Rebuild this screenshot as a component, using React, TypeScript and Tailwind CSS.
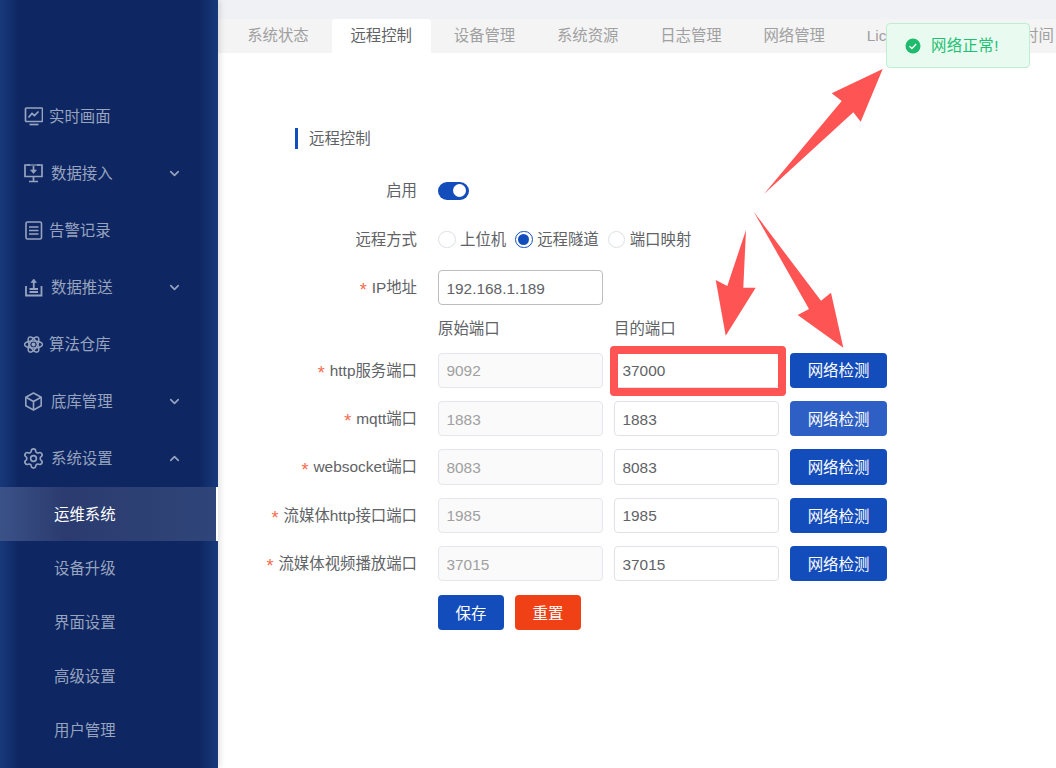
import { ChevronDown, ChevronUp, Settings } from "lucide-react";
import type { ReactNode } from "react";

const tabs = ["系统状态", "远程控制", "设备管理", "系统资源", "日志管理", "网络管理", "License授权", "系统时间"];

const ports = [
  { label: "http服务端口", from: "9092", to: "37000", lighter: false },
  { label: "mqtt端口", from: "1883", to: "1883", lighter: true },
  { label: "websocket端口", from: "8083", to: "8083", lighter: false },
  { label: "流媒体http接口端口", from: "1985", to: "1985", lighter: false },
  { label: "流媒体视频播放端口", from: "37015", to: "37015", lighter: false },
];

function ChartIcon() {
  return (
    <svg className="h-[19px] w-[19px]" viewBox="0 0 19 19" fill="none" stroke="currentColor" strokeWidth="1.7">
      <rect x="1.500" y="1" width="17" height="13.500" rx="1" />
      <path d="M4.500 10.500l3.500-4 2.500 2 4-4" />
      <path d="M5.500 17.500h9" />
    </svg>
  );
}

function MonitorDownIcon() {
  return (
    <svg className="h-[19px] w-[19px]" viewBox="0 0 19 19" fill="none" stroke="currentColor" strokeWidth="1.700">
      <path d="M6 1H1v11.500h17V1h-5" />
      <path d="M3 1h13" strokeWidth="1.200" />
      <path d="M9.500 12.500v4.500M5 17.500h9" />
      <path d="M9.500 2v4" />
      <path d="M6.500 6h6l-3 3.500z" fill="currentColor" strokeWidth="0.600" />
    </svg>
  );
}

function ListIcon() {
  return (
    <svg className="h-[19px] w-[19px]" viewBox="0 0 19 19" fill="none" stroke="currentColor" strokeWidth="1.600">
      <rect x="2" y="1" width="15.500" height="17" rx="1.500" />
      <path d="M5 6h9.500M5 9.500h9.500M5 13h9.500" />
    </svg>
  );
}

function PushIcon() {
  return (
    <svg className="h-[19px] w-[19px]" viewBox="0 0 19 19" fill="none" stroke="currentColor" strokeWidth="1.800">
      <path d="M2 8v9.500h15.500V8" />
      <path d="M5.500 14h8.500M5.500 11h8.500" />
      <path d="M9.750 10V3" />
      <path d="M7 4.500L9.750 1l2.750 3.500z" fill="currentColor" strokeWidth="0.600" />
    </svg>
  );
}

function AtomIcon() {
  return (
    <svg className="h-[19px] w-[19px]" viewBox="0 0 19 19" fill="none" stroke="currentColor" strokeWidth="1.500">
      <ellipse cx="9.500" cy="9.500" rx="9" ry="3.500" />
      <ellipse cx="9.500" cy="9.500" rx="8.500" ry="3.800" transform="rotate(60 9.500 9.500)" />
      <ellipse cx="9.500" cy="9.500" rx="8.500" ry="3.800" transform="rotate(120 9.500 9.500)" />
      <circle cx="9.500" cy="9.500" r="1.300" fill="currentColor" />
    </svg>
  );
}

function CubeIcon() {
  return (
    <svg className="h-[19px] w-[19px]" viewBox="0 0 19 19" fill="none" stroke="currentColor" strokeWidth="1.600">
      <path d="M9.500 1l7.700 4.200v8.600L9.500 18l-7.700-4.200V5.200z" strokeLinejoin="round" />
      <path d="M2 5.300l7.500 4.200 7.500-4.200M9.500 9.500V18" />
    </svg>
  );
}

function MenuItem({ icon, label, arrow }: { icon: ReactNode; label: string; arrow?: "up" | "down" }) {
  return (
    <div className="flex h-[57px] items-center pl-[24px]">
      <span className="flex w-[19px] shrink-0 justify-center text-[#98a4bf]">{icon}</span>
      <span className={arrow ? "ml-[8px]" : "ml-[6px]"}>{label}</span>
      {arrow === "down" ? <ChevronDown className="ml-auto mr-[36px] h-[15px] w-[15px]" strokeWidth={2.600} /> : null}
      {arrow === "up" ? <ChevronUp className="ml-auto mr-[36px] h-[15px] w-[15px]" strokeWidth={2.600} /> : null}
    </div>
  );
}

function SubItem({ label, active }: { label: string; active?: boolean }) {
  return (
    <div
      className={
        active
          ? "flex h-[54px] items-center border-r-2 border-white bg-gradient-to-r from-[#3b5288] via-[#2b3b6f] via-30% to-[#2f4579] pl-[54px] pt-[1.500px] text-white"
          : "flex h-[54px] items-center pl-[54px] pt-[1.500px]"
      }
    >
      {label}
    </div>
  );
}

function Sidebar() {
  return (
    <aside className="relative z-10 flex h-[768px] w-[218px] shrink-0 flex-col bg-[linear-gradient(to_right,#17397a_0px,#0e2661_20px,#0e2661_198px,#17397a_218px)] pt-[88px] text-[15.400px] text-[#98a4bf] shadow-[2px_0_6px_rgba(0,0,0,0.12)]">
      <MenuItem icon={<ChartIcon />} label="实时画面" />
      <MenuItem icon={<MonitorDownIcon />} label="数据接入" arrow="down" />
      <MenuItem icon={<ListIcon />} label="告警记录" />
      <MenuItem icon={<PushIcon />} label="数据推送" arrow="down" />
      <MenuItem icon={<AtomIcon />} label="算法仓库" />
      <MenuItem icon={<CubeIcon />} label="底库管理" arrow="down" />
      <MenuItem icon={<Settings className="h-[23px] w-[23px] shrink-0" strokeWidth={1.700} />} label="系统设置" arrow="up" />
      <SubItem label="运维系统" active />
      <SubItem label="设备升级" />
      <SubItem label="界面设置" />
      <SubItem label="高级设置" />
      <SubItem label="用户管理" />
    </aside>
  );
}

function Tabs() {
  return (
    <div className="mt-[19px] flex h-[34px] overflow-hidden bg-[#f4f4f5] pl-[10.500px] text-[15.400px] text-[#a0a0a0]">
      {tabs.map((tab, index) => (
        <div
          key={tab}
          className={
            index === 1
              ? "mr-[4.300px] flex shrink-0 items-center rounded-t-[4px] bg-white px-[18.700px] text-[#606266]"
              : "mr-[4.300px] flex shrink-0 items-center px-[18.700px]"
          }
        >
          {tab}
        </div>
      ))}
    </div>
  );
}

function Label({ text, required }: { text: string; required?: boolean }) {
  return (
    <div className="flex w-[199px] shrink-0 items-center justify-end text-[#606266]">
      {required ? <span className="mr-[5px] mt-[5px] text-[18px] leading-none text-[#f56c4d]">*</span> : null}
      {text}
    </div>
  );
}

function Field({ value, disabled, strong }: { value: string; disabled?: boolean; strong?: boolean }) {
  let tone = "border-[#dfe2e8] bg-white text-[#606266]";
  if (disabled) tone = "border-[#e4e7ed] bg-[#fafafa] text-[#a0a0a0]";
  if (strong) tone = "border-[#bdbdbd] bg-white text-[#606266]";
  return (
    <input
      className={`h-[35.200px] w-[165px] rounded-[4px] border px-[7.500px] pt-[2px] text-[15.400px] outline-none ${tone}`}
      readOnly
      value={value}
    />
  );
}

function Radio({ label, checked }: { label: string; checked?: boolean }) {
  return (
    <div className="mr-[9px] flex items-center gap-[4.400px]">
      <span
        className={
          checked
            ? "flex h-[17.600px] w-[17.600px] items-center justify-center rounded-full border border-[#134dbb] bg-white"
            : "h-[17.600px] w-[17.600px] rounded-full border border-[#dcdfe6] bg-white"
        }
      >
        {checked ? <span className="h-[11px] w-[11px] rounded-full bg-[#134dbb]" /> : null}
      </span>
      <span className="text-[#606266]">{label}</span>
    </div>
  );
}

function RemoteForm() {
  return (
    <div className="flex flex-col gap-[13.200px] pt-[120.400px] text-[15.400px]">
      <div className="flex h-[35.200px] items-center">
        <Label text="启用" />
        <div className="relative ml-[21px] h-[18px] w-[31px] rounded-full bg-[#134dbb]">
          <span className="absolute right-[3px] top-[2.500px] h-[13px] w-[13px] rounded-full bg-white" />
        </div>
      </div>
      <div className="flex h-[35.200px] items-center">
        <Label text="远程方式" />
        <div className="ml-[21px] flex">
          <Radio label="上位机" />
          <Radio label="远程隧道" checked />
          <Radio label="端口映射" />
        </div>
      </div>
      <div className="flex h-[35.200px] items-center">
        <Label text="IP地址" required />
        <div className="ml-[21px]">
          <Field value="192.168.1.189" strong />
        </div>
      </div>
      <div className="flex h-[21px] items-center text-[#606266]">
        <div className="ml-[220px] w-[176px]">原始端口</div>
        <div>目的端口</div>
      </div>
      {ports.map((port) => (
        <div key={port.label} className="flex h-[35.200px] items-center">
          <Label text={port.label} required />
          <div className="ml-[21px] flex gap-[11px]">
            <Field value={port.from} disabled />
            <Field value={port.to} />
            <button
              className={`h-[35.200px] w-[97px] rounded-[4px] pt-[1.500px] text-[15.400px] text-white ${port.lighter ? "bg-[#2d5fc4]" : "bg-[#134dbb]"}`}
              type="button"
            >
              网络检测
            </button>
          </div>
        </div>
      ))}
      <div className="ml-[220px] flex gap-[11px]">
        <button className="h-[35.200px] w-[66px] rounded-[4px] bg-[#134dbb] pt-[2.500px] text-white" type="button">
          保存
        </button>
        <button className="h-[35.200px] w-[66px] rounded-[4px] bg-[#f04116] pt-[2.500px] text-white" type="button">
          重置
        </button>
      </div>
    </div>
  );
}

export default function App() {
  return (
    <div className="relative flex h-[768px] w-[1056px] overflow-hidden bg-white font-['Liberation_Sans','Noto_Sans_CJK_SC',sans-serif]">
      <Sidebar />
      <main className="relative min-w-0 flex-1 bg-white">
        <div className="absolute inset-x-0 top-0 h-[19px] bg-[#f0f1f4]" />
        <div className="relative">
          <Tabs />
        </div>
        <div className="absolute left-[77px] top-[128px] flex h-[21px] items-center border-l-[3px] border-[#134dbb] pl-[11px] text-[15.400px] text-[#606266]">
          远程控制
        </div>
        <RemoteForm />
      </main>

      {/* toast */}
      <div className="absolute left-[886px] top-[23px] flex h-[45px] w-[144px] items-center gap-[10px] rounded-[4px] border border-[#bdeecf] bg-[#e9fbf0] pl-[18px] text-[15.400px] tracking-[0.400px] text-[#1cc070]">
        <svg className="h-[16px] w-[16px] shrink-0" viewBox="0 0 16 16">
          <circle cx="8" cy="8" r="7.500" fill="#1fbb6c" />
          <path d="M4.500 8.200l2.400 2.300 4.300-4.500" fill="none" stroke="#ffffff" strokeWidth="1.300" />
        </svg>
        网络正常!
      </div>

      {/* screenshot annotations */}
      <div className="absolute left-[610px] top-[346px] h-[50px] w-[176px] rounded-[4px] border-[8px] border-[#ff5454]" />
      <svg className="pointer-events-none absolute inset-0 h-[768px] w-[1056px]" viewBox="0 0 1056 768">
        <polygon fill="#ff5454" points="764,194 841.700,101 831.700,93.300 882.700,69 860.700,121.700 853.300,112.300" />
        <polygon fill="#ff5454" points="746,230 743.300,287.700 755.700,287.700 725.700,335.700 715.700,280 727.300,286" />
        <polygon fill="#ff5454" points="753.700,211.700 821,300.700 831,292.700 843.300,347.700 797.700,315 809,309" />
      </svg>
    </div>
  );
}
